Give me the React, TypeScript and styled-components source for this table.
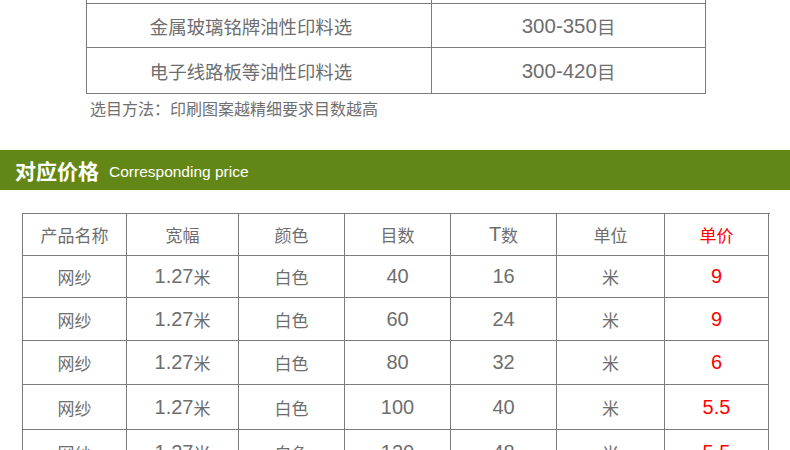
import React from "react";
import styled, { createGlobalStyle } from "styled-components";

const GlobalStyle = createGlobalStyle`
    html, body {
        margin: 0;
        padding: 0;
        background: #fff;
    }
    body {
        width: 790px;
        overflow: hidden;
        font-family: "Liberation Sans", "Noto Sans CJK SC", sans-serif;
        color: #707070;
    }
`;

const specRows = [
    { h: 4, left: "", right: "" },
    { h: 44, left: "金属玻璃铭牌油性印料选", right: "300-350目" },
    { h: 46, left: "电子线路板等油性印料选", right: "300-420目" },
];

const headers = ["产品名称", "宽幅", "颜色", "目数", "T数", "单位", "单价"];

const prices = [
    ["网纱", "1.27米", "白色", "40", "16", "米", "9"],
    ["网纱", "1.27米", "白色", "60", "24", "米", "9"],
    ["网纱", "1.27米", "白色", "80", "32", "米", "6"],
    ["网纱", "1.27米", "白色", "100", "40", "米", "5.5"],
    ["网纱", "1.27米", "白色", "120", "48", "米", "5.5"],
];

const rowHeights = [42, 42, 43, 44, 45, 45];
const priceCols = "104px 112px 106px 106px 106px 108px 104px";

// split text into han / latin runs so the two scripts get their own sizes
const Mixed = ({ text, han }: { text: string; han: number }) => {
    const parts = text.split(/([\u4e00-\u9fff\uff00-\uffef]+)/).filter(Boolean);
    return (
        <>
            {parts.map((p, i) =>
                /[\u4e00-\u9fff\uff00-\uffef]/.test(p)
                    ? <Han key={i} $size={han}>{p}</Han>
                    : <span key={i}>{p}</span>
            )}
        </>
    );
};

export default function App() {
    return (
        <Page>
            <GlobalStyle />
            <SpecTable>
                {specRows.map((r, i) => (
                    <SpecRow key={i} $h={r.h}>
                        <SpecCell $pr={16}><Mixed text={r.left} han={18.4} /></SpecCell>
                        <SpecCell><Mixed text={r.right} han={18.4} /></SpecCell>
                    </SpecRow>
                ))}
            </SpecTable>
            <Note>选目方法：印刷图案越精细要求目数越高</Note>

            <SectionBar>
                <BarTitle>对应价格</BarTitle>
                <BarSub>Corresponding price</BarSub>
            </SectionBar>

            <PriceTable>
                <PriceRow $h={rowHeights[0]}>
                    {headers.map((h, i) => (
                        <PriceCell key={h} $red={i === 6}><Mixed text={h} han={17} /></PriceCell>
                    ))}
                </PriceRow>
                {prices.map((row, r) => (
                    <PriceRow key={r} $h={rowHeights[r + 1]}>
                        {row.map((c, i) => (
                            <PriceCell key={i} $red={i === 6}><Mixed text={c} han={17} /></PriceCell>
                        ))}
                    </PriceRow>
                ))}
            </PriceTable>
        </Page>
    );
}

const Page = styled.div`
    width: 790px;
    height: 450px;
    overflow: hidden;
`;

const Han = styled.span<{ $size: number }>`
    font-family: "Noto Sans CJK SC", sans-serif;
    font-size: ${(p) => p.$size}px;
`;

const SpecTable = styled.div`
    margin-left: 86px;
    width: 620px;
    border-left: 1px solid #7c7c7c;
`;

const SpecRow = styled.div<{ $h: number }>`
    display: grid;
    grid-template-columns: 345px 274px;
    height: ${(p) => p.$h}px;
`;

const SpecCell = styled.div<{ $pr?: number }>`
    box-sizing: border-box;
    display: flex;
    align-items: center;
    justify-content: center;
    overflow: hidden;
    padding-right: ${(p) => p.$pr ?? 0}px;
    border-right: 1px solid #7c7c7c;
    border-bottom: 1px solid #7c7c7c;
    font-size: 20.5px;
    color: #6e6e6e;
`;

const Note = styled.div`
    margin: 6px 0 0 90px;
    height: 17px;
    line-height: 17px;
    font-family: "Noto Sans CJK SC", sans-serif;
    font-size: 16px;
    color: #707070;
`;

const SectionBar = styled.div`
    margin-top: 33px;
    height: 40px;
    background: #638716;
    display: flex;
    align-items: center;
    padding-left: 15px;
    gap: 10px;
    color: #fff;
`;

const BarTitle = styled.span`
    font-family: "Noto Sans CJK SC", sans-serif;
    font-weight: 700;
    font-size: 21px;
    line-height: 1;
`;

const BarSub = styled.span`
    font-family: "Liberation Sans", sans-serif;
    font-size: 15.5px;
    padding-top: 3px;
`;

const PriceTable = styled.div`
    margin: 23px 0 0 22px;
    width: 747px;
    border-left: 1px solid #7c7c7c;
    border-top: 1px solid #7c7c7c;
`;

const PriceRow = styled.div<{ $h: number }>`
    display: grid;
    grid-template-columns: ${priceCols};
    height: ${(p) => p.$h}px;
`;

const PriceCell = styled.div<{ $red?: boolean }>`
    box-sizing: border-box;
    display: flex;
    align-items: center;
    justify-content: center;
    border-right: 1px solid #7c7c7c;
    border-bottom: 1px solid #7c7c7c;
    font-size: 20px;
    color: ${(p) => (p.$red ? "#ff0000" : "#6e6e6e")};
`;
